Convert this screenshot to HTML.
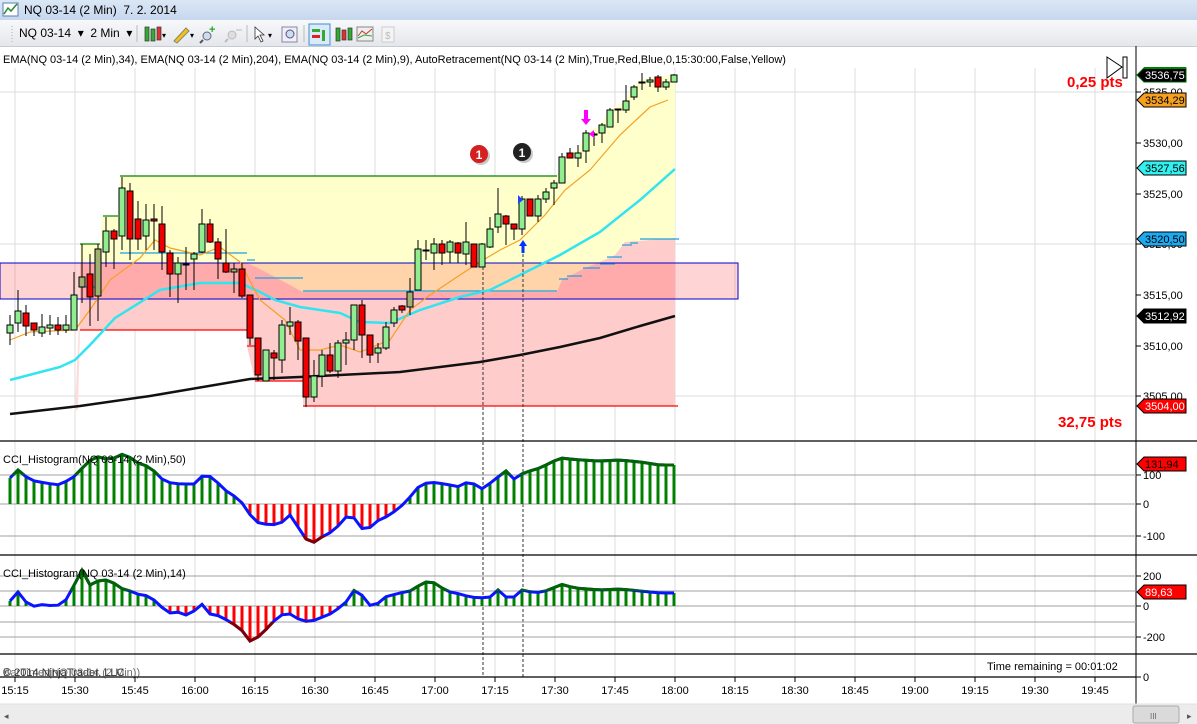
<!DOCTYPE html>
<html><head><meta charset="utf-8">
<style>
html,body{margin:0;padding:0;width:1197px;height:724px;overflow:hidden;background:#fff;font-family:"Liberation Sans",sans-serif;}
#title{position:absolute;left:0;top:0;width:1197px;height:20px;background:linear-gradient(#dbe7f5,#c6d7ee);font-size:12px;}
#tb{position:absolute;left:0;top:20px;width:1197px;height:26px;background:linear-gradient(#f7f8fa,#e4e7ec);border-bottom:1px solid #c8ccd2;font-size:12px;}
svg{position:absolute;left:0;top:0}
</style></head><body>
<div id="title"><span style="position:absolute;left:24px;top:3px">NQ 03-14 (2 Min)&nbsp; 7. 2. 2014</span></div>
<div id="tb">
<span style="position:absolute;left:19px;top:6px">NQ 03-14 &nbsp;▾&nbsp; 2 Min &nbsp;▾</span>
</div>
<svg id="s" width="1197" height="724" xmlns="http://www.w3.org/2000/svg" font-family="Liberation Sans, sans-serif"></svg>
<script>
var S=[];
function a(t){S.push(t);}
// title icon
a('<rect x="3" y="3" width="15" height="13" fill="#fff" stroke="#5a7fb0"/><path d="M4,14 L8,8 L11,11 L17,4" stroke="#2a8a2a" fill="none" stroke-width="1.5"/>');
// toolbar icons
a('<line x1="12" y1="26" x2="12" y2="42" stroke="#aaa" stroke-dasharray="1,2"/>');
a('<line x1="137" y1="25" x2="137" y2="42" stroke="#bbb"/><line x1="247" y1="25" x2="247" y2="42" stroke="#bbb"/><line x1="304" y1="25" x2="304" y2="42" stroke="#bbb"/>');
a('<rect x="145" y="27" width="4" height="14" fill="#3a3" stroke="#333" stroke-width=".7"/><rect x="151" y="29" width="4" height="12" fill="#3a3" stroke="#333" stroke-width=".7"/><rect x="157" y="27" width="4" height="13" fill="#d33" stroke="#333" stroke-width=".7"/><text x="162" y="38" font-size="8">▾</text>');
a('<path d="M174,41 L186,28 L189,31 L177,43 Z" fill="#f3c020" stroke="#886"/><text x="190" y="38" font-size="8">▾</text>');
a('<circle cx="207" cy="36" r="4" fill="#cde" stroke="#667"/><line x1="203" y1="40" x2="200" y2="43" stroke="#556" stroke-width="2"/><text x="209" y="33" fill="#2a2" font-size="11" font-weight="bold">+</text>');
a('<circle cx="232" cy="35" r="4" fill="#ddd" stroke="#bbb"/><line x1="228" y1="39" x2="225" y2="42" stroke="#bbb" stroke-width="2"/><line x1="236" y1="30" x2="242" y2="30" stroke="#bbb"/>');
a('<path d="M255,27 L255,39 L258,36 L261,42 L263,41 L260,35 L264,35 Z" fill="#fff" stroke="#333" stroke-width=".8"/><text x="268" y="38" font-size="8">▾</text>');
a('<rect x="282" y="27" width="15" height="15" fill="#eef" stroke="#889"/><circle cx="290" cy="34" r="4" fill="#cde" stroke="#557"/>');
a('<rect x="309" y="24" width="21" height="21" fill="#dbeaf9" stroke="#3b8fd9"/><rect x="312" y="29" width="8" height="3" fill="#3a3"/><rect x="312" y="35" width="8" height="3" fill="#d22"/><rect x="322" y="30" width="3" height="11" fill="#3a3"/>');
a('<rect x="336" y="28" width="4" height="13" fill="#3a3" stroke="#333" stroke-width=".7"/><rect x="342" y="30" width="4" height="10" fill="#d33" stroke="#333" stroke-width=".7"/><rect x="348" y="28" width="4" height="12" fill="#3a3" stroke="#333" stroke-width=".7"/>');
a('<rect x="357" y="27" width="16" height="14" fill="#eee" stroke="#888"/><path d="M358,36 L362,31 L366,34 L372,29" stroke="#c33" fill="none"/><path d="M358,38 L364,35 L372,36" stroke="#3a3" fill="none"/>');
a('<rect x="382" y="27" width="12" height="15" fill="#f4f4f4" stroke="#ccc"/><text x="385" y="39" font-size="10" fill="#bbb">$</text>');
// indicator label line
a('<text x="3" y="63" font-size="11" fill="#000">EMA(NQ 03-14 (2 Min),34), EMA(NQ 03-14 (2 Min),204), EMA(NQ 03-14 (2 Min),9), AutoRetracement(NQ 03-14 (2 Min),True,Red,Blue,0,15:30:00,False,Yellow)</text>');
// vertical grid
for(var gx=15;gx<=1095;gx+=60){a('<line x1="'+gx+'" y1="68" x2="'+gx+'" y2="440" stroke="#dcdcdc"/><line x1="'+gx+'" y1="442" x2="'+gx+'" y2="676" stroke="#dcdcdc"/>');}
[92,244,396].forEach(function(y){a('<line x1="0" y1="'+y+'" x2="1136" y2="'+y+'" stroke="#dcdcdc"/>');});
// zones
a('<polygon points="80,299 80,244 100,244 102,216 118,216 120,176 557,176 562,157 578,150 586,133 600,125 610,110 625,101 632,87 640,80 675,74 675,299" fill="#ffffcc"/>');
a('<polygon points="75,410 80,300 80,330 78,410" fill="#ffdcdc"/>');
a('<polygon points="80,330 80,263 247,263 258,268 303,292 557,292 562,280 585,268 600,262 615,255 625,242 675,238 675,406 303,406 303,381 255,381 247,346 247,330" fill="#ffcccc"/>');
a('<rect x="0" y="263" width="738" height="36" fill="rgba(255,40,40,0.2)" stroke="#0000cc" stroke-width="1"/>');
// level lines
a('<g stroke="#008000" stroke-width="1.2"><line x1="120" y1="176" x2="557" y2="176"/><line x1="80" y1="244" x2="100" y2="244"/><line x1="103" y1="216" x2="118" y2="216"/></g>');
a('<g stroke="#ff0000" stroke-width="1.2"><line x1="80" y1="330" x2="247" y2="330"/><line x1="303" y1="406" x2="678" y2="406"/><line x1="255" y1="381" x2="303" y2="381"/><line x1="247" y1="346" x2="255" y2="346"/></g>');
a('<g stroke="#1e9fe0" stroke-width="1.2"><line x1="120" y1="253" x2="247" y2="253"/><line x1="80" y1="287" x2="100" y2="287"/><line x1="247" y1="260" x2="255" y2="260"/><line x1="255" y1="278" x2="303" y2="278"/><line x1="303" y1="291" x2="557" y2="291"/><line x1="559" y1="279" x2="568" y2="279"/><line x1="567" y1="276" x2="582" y2="276"/><line x1="583" y1="268" x2="600" y2="268"/><line x1="600" y1="264" x2="615" y2="264"/><line x1="607" y1="257" x2="622" y2="257"/><line x1="622" y1="245" x2="632" y2="245"/><line x1="630" y1="243" x2="638" y2="243"/><line x1="640" y1="239" x2="679" y2="239"/></g>');
// EMAs
a('<polyline fill="none" stroke="#111" stroke-width="2.5" points="10,414 80,406 150,396 250,379 300,377 400,372 480,362 520,355 560,347 600,338 640,326 675,316"/>');
a('<polyline fill="none" stroke="#30e4f0" stroke-width="2.5" points="10,380 60,367 75,360 90,345 115,318 160,290 200,283 240,283 260,292 275,300 300,307 340,313 360,322 390,323 420,310 460,297 490,290 520,275 560,255 600,232 640,200 675,169"/>');
a('<polyline fill="none" stroke="#f5a020" stroke-width="1.2" points="10,340 30,332 75,330 90,310 110,280 140,258 155,240 170,248 200,255 220,247 240,262 260,300 285,320 300,350 320,350 340,345 360,352 390,340 410,310 430,295 460,275 480,262 500,250 520,240 545,215 565,190 590,170 620,135 650,107 668,100"/>');
// candles [x,bodyTop,bodyBot,wickTop,wickBot,col]
var C=[[10,325,333,315,345,'g'],[18,311,323,290,332,'g'],[26,313,326,305,336,'r'],[34,323,330,323,336,'r'],[42,327,333,314,337,'g'],[50,325,328,315,335,'g'],[58,325,330,317,335,'r'],[66,325,330,315,333,'g'],[74,295,330,272,330,'g'],[82,277,287,244,303,'o'],[90,274,297,254,326,'r'],[98,249,296,244,321,'o'],[106,231,252,217,267,'g'],[114,231,239,229,269,'r'],[122,188,236,177,250,'g'],[130,191,239,183,260,'r'],[138,219,239,201,250,'r'],[146,220,236,204,250,'g'],[154,219,221,204,250,'r'],[162,224,252,206,270,'r'],[170,253,274,250,297,'r'],[178,263,274,257,303,'g'],[186,264,265,247,290,'r'],[194,254,259,252,290,'g'],[202,224,252,209,253,'g'],[210,224,242,219,243,'r'],[218,242,259,238,279,'r'],[226,263,272,229,273,'r'],[234,269,272,263,293,'o'],[242,269,296,263,298,'r'],[250,295,338,295,345,'r'],[258,338,375,338,381,'r'],[266,350,381,350,381,'g'],[274,353,358,350,380,'r'],[282,325,360,320,373,'g'],[290,322,326,307,335,'g'],[298,322,341,320,360,'r'],[306,338,397,338,407,'r'],[314,376,397,360,402,'g'],[322,355,376,350,387,'g'],[330,355,371,343,373,'r'],[338,343,371,340,378,'g'],[346,340,343,332,365,'g'],[354,305,340,305,350,'g'],[362,305,335,300,358,'r'],[370,335,355,335,363,'r'],[378,348,353,343,363,'g'],[386,327,348,322,350,'g'],[394,310,323,307,327,'g'],[402,306,310,305,313,'r'],[410,292,307,278,315,'o'],[418,249,290,240,290,'g'],[426,250,251,240,260,'g'],[434,244,253,238,270,'g'],[442,244,253,240,265,'r'],[450,242,252,240,263,'g'],[458,243,253,242,263,'r'],[466,242,254,222,265,'g'],[474,244,267,244,267,'r'],[482,244,267,243,267,'g'],[490,229,247,217,248,'g'],[498,214,227,188,233,'g'],[506,216,224,215,245,'r'],[514,224,229,224,240,'r'],[522,199,229,196,235,'g'],[530,199,216,199,216,'r'],[538,199,216,195,222,'g'],[546,192,199,188,203,'g'],[554,183,188,180,205,'g'],[562,157,183,153,183,'g'],[570,153,158,148,158,'r'],[578,153,158,145,167,'g'],[586,133,151,130,163,'g'],[594,134,135,132,146,'g'],[602,125,133,123,143,'g'],[610,110,127,108,127,'g'],[618,109,110,109,123,'g'],[626,101,110,85,113,'g'],[634,87,97,85,100,'g'],[642,82,83,73,90,'g'],[650,80,82,77,87,'g'],[658,77,87,75,92,'r'],[666,82,87,79,90,'g'],[674,75,82,74,82,'g']];
C.forEach(function(c){var col=c[5]=='g'?'#90ee90':c[5]=='r'?'#ee0000':'#a0b070';
a('<line x1="'+c[0]+'" y1="'+c[3]+'" x2="'+c[0]+'" y2="'+c[4]+'" stroke="#000"/>');
var h=Math.max(1,c[2]-c[1]);a('<rect x="'+(c[0]-3)+'" y="'+c[1]+'" width="6" height="'+h+'" fill="'+col+'" stroke="#000" stroke-width="1"/>');});
// markers
a('<circle cx="481" cy="156" r="9" fill="#222" opacity=".25"/><circle cx="479" cy="154" r="9" fill="#d42020"/><text x="479" y="159" font-size="12" font-weight="bold" fill="#fff" text-anchor="middle">1</text>');
a('<circle cx="524" cy="154" r="9" fill="#222" opacity=".25"/><circle cx="522" cy="152" r="9" fill="#222"/><text x="522" y="157" font-size="12" font-weight="bold" fill="#fff" text-anchor="middle">1</text>');
a('<path d="M523,240 L519,246 L521.5,246 L521.5,253 L524.5,253 L524.5,246 L527,246 Z" fill="#0033ff"/><path d="M518,195 L523,200 L518,204 Z" fill="#2040ff"/>');
a('<path d="M586,125 L581,119 L584,119 L584,110 L588,110 L588,119 L591,119 Z" fill="#ff00ff"/><path d="M594,130 L589,134 L594,138 Z" fill="#ff00ff"/>');
a('<line x1="483" y1="267" x2="483" y2="677" stroke="#333" stroke-dasharray="3,2"/><line x1="523" y1="254" x2="523" y2="677" stroke="#333" stroke-dasharray="3,2"/>');
// right text & icons
a('<text x="1067" y="87" font-size="15" font-weight="bold" fill="#ff0000">0,25 pts</text><text x="1058" y="427" font-size="15" font-weight="bold" fill="#ff0000">32,75 pts</text>');
a('<path d="M1107,57 L1122,67 L1107,78 Z" fill="#fff" stroke="#000"/><rect x="1123" y="57" width="4" height="21" fill="#fff" stroke="#000"/>');
// panel separators & axis
a('<line x1="0" y1="441" x2="1197" y2="441" stroke="#000" stroke-width="1.2"/><line x1="0" y1="555" x2="1197" y2="555" stroke="#000" stroke-width="1.2"/><line x1="0" y1="654" x2="1197" y2="654" stroke="#000" stroke-width="1.2"/><line x1="0" y1="677" x2="1136" y2="677" stroke="#000" stroke-width="1.2"/>');
a('<line x1="1136" y1="46" x2="1136" y2="704" stroke="#000"/>');
function tick(y,t){a('<line x1="1136" y1="'+y+'" x2="1141" y2="'+y+'" stroke="#000"/><text x="1143" y="'+(y+4)+'" font-size="11">'+t+'</text>');}
tick(92,'3535,00');tick(143,'3530,00');tick(194,'3525,00');tick(244,'3520,00');tick(295,'3515,00');tick(346,'3510,00');tick(396,'3505,00');
tick(475,'100');tick(504,'0');tick(536,'-100');tick(576,'200');tick(606,'0');tick(637,'-200');tick(677,'0');
function tag(y,t,bg,fg,bd){a('<path d="M1137,'+y+' L1144,'+(y-7)+' L1186,'+(y-7)+' L1186,'+(y+7)+' L1144,'+(y+7)+' Z" fill="'+bg+'" stroke="'+(bd||'#000')+'"/><text x="1145" y="'+(y+4)+'" font-size="11" fill="'+fg+'">'+t+'</text>');}
tag(75,'3536,75','#000','#fff','#006400');a('<line x1="1144" y1="68" x2="1186" y2="68" stroke="#008000" stroke-width="2"/>');
tag(100,'3534,29','#f5a020','#000');tag(168,'3527,56','#30f0f0','#000');tag(239,'3520,50','#1eaaf0','#000');tag(316,'3512,92','#000','#fff');tag(406,'3504,00','#ff0000','#fff');
tag(464,'131,94','#ff0000','#000');tag(592,'89,63','#ff0000','#fff');
// CCI panels
[475,504,536,576,591,606,622,637].forEach(function(y){a('<line x1="0" y1="'+y+'" x2="1136" y2="'+y+'" stroke="#a0a0a0"/>');});
function interp(P,x){for(var i=0;i<P.length-1;i++){if(x>=P[i][0]&&x<=P[i+1][0]){var t=(x-P[i][0])/(P[i+1][0]-P[i][0]);return P[i][1]+t*(P[i+1][1]-P[i][1]);}}return P[P.length-1][1];}
function cci(P,zero,hi,lo,id){var pts=[];for(var x=10;x<=675;x+=8){var y=interp(P,x);pts.push(x+','+y.toFixed(1));
a('<line x1="'+x+'" y1="'+zero+'" x2="'+x+'" y2="'+y.toFixed(1)+'" stroke="'+(y<zero?'#008000':'#ff0000')+'" stroke-width="3"/>');}
var p=pts.join(' ');
a('<clipPath id="h'+id+'"><rect x="0" y="0" width="700" height="'+hi+'"/></clipPath><clipPath id="l'+id+'"><rect x="0" y="'+lo+'" width="700" height="100"/></clipPath>');
a('<polyline points="'+p+'" fill="none" stroke="#0a14ff" stroke-width="3"/>');
a('<polyline points="'+p+'" fill="none" stroke="#006400" stroke-width="3" clip-path="url(#h'+id+')"/>');
a('<polyline points="'+p+'" fill="none" stroke="#800000" stroke-width="3" clip-path="url(#l'+id+')"/>');}
cci([[10,478],[18,470],[30,480],[45,483],[60,485],[75,476],[85,465],[95,456],[110,460],[125,453],[135,462],[150,467],[165,482],[180,484],[195,484],[205,473],[215,480],[225,490],[240,500],[255,522],[270,525],[280,524],[290,515],[300,530],[310,545],[320,538],[335,530],[345,517],[355,518],[365,533],[375,522],[390,515],[405,503],[420,485],[430,482],[445,484],[460,487],[470,480],[480,490],[495,480],[505,470],[515,480],[523,473],[540,468],[560,458],[580,460],[600,461],[620,460],[640,462],[660,465],[675,465]],504,475,536,1);
cci([[10,601],[18,592],[30,607],[45,604],[55,607],[65,601],[72,592],[80,565],[88,586],[100,580],[110,580],[120,588],[130,591],[140,595],[150,596],[160,606],[170,613],[180,612],[190,617],[200,602],[210,614],[220,616],[230,622],[240,628],[250,641],[260,636],[270,625],[280,615],[290,614],[300,620],[310,622],[320,618],[330,614],[345,604],[352,590],[360,592],[368,605],[375,606],[385,597],[400,593],[410,591],[420,585],[430,580],[440,587],[450,592],[460,594],[470,597],[480,598],[490,597],[498,590],[506,597],[515,597],[522,590],[535,593],[550,590],[560,584],[575,588],[600,590],[620,589],[640,591],[660,593],[675,593]],606,591,622,2);
a('<text x="3" y="463" font-size="11">CCI_Histogram(NQ 03-14 (2 Min),50)</text><text x="3" y="577" font-size="11">CCI_Histogram(NQ 03-14 (2 Min),14)</text>');
a('<text x="3" y="676" font-size="11" fill="#333">© 2014 NinjaTrader, LLC</text><text x="3" y="676" font-size="11" fill="#333" opacity=".7">BarTimer(NQ 03-14 (2 Min))</text>');
a('<text x="987" y="670" font-size="11">Time remaining = 00:01:02</text>');
// time axis
var T=['15:15','15:30','15:45','16:00','16:15','16:30','16:45','17:00','17:15','17:30','17:45','18:00','18:15','18:30','18:45','19:00','19:15','19:30','19:45'];
T.forEach(function(t,i){var x=15+60*i;a('<line x1="'+x+'" y1="677" x2="'+x+'" y2="682" stroke="#000"/><text x="'+x+'" y="694" font-size="11" text-anchor="middle">'+t+'</text>');});
// scrollbar
a('<rect x="0" y="704" width="1197" height="20" fill="#ececec"/><line x1="0" y1="704" x2="1197" y2="704" stroke="#e0e0e0"/><text x="4" y="719" font-size="9" fill="#555">◂</text><rect x="1133" y="706" width="46" height="17" rx="2" fill="#dadada" stroke="#aaa"/><text x="1150" y="719" font-size="8" fill="#666">III</text><text x="1187" y="719" font-size="9" fill="#555">▸</text>');
document.getElementById('s').innerHTML=S.join('');
</script>
</body></html>
